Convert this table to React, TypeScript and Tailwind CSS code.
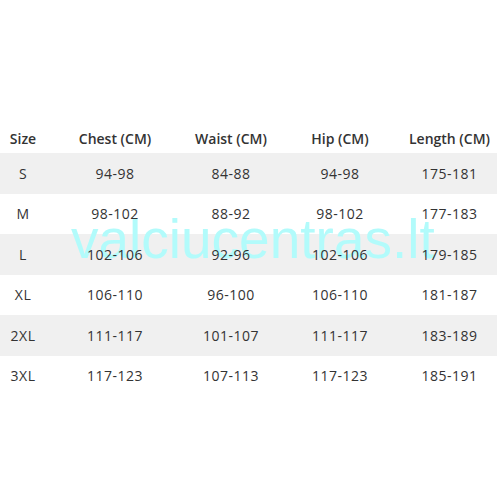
import React from "react";

const headers = ["Size", "Chest (CM)", "Waist (CM)", "Hip (CM)", "Length (CM)"];

const rows: string[][] = [
  ["S", "94-98", "84-88", "94-98", "175-181"],
  ["M", "98-102", "88-92", "98-102", "177-183"],
  ["L", "102-106", "92-96", "102-106", "179-185"],
  ["XL", "106-110", "96-100", "106-110", "181-187"],
  ["2XL", "111-117", "101-107", "111-117", "183-189"],
  ["3XL", "117-123", "107-113", "117-123", "185-191"],
];

const grid = "grid grid-cols-[46px_138px_94px_124px_95px] items-center";

export default function App() {
  return (
    <div className="relative w-[500px] h-[500px] bg-white overflow-hidden font-['Open_Sans',sans-serif] text-[#333]">
      <div className="w-[497px] pt-[123px]">
        <div className={`${grid} h-[30px] text-[14px] font-semibold`}>
          {headers.map((h) => (
            <div key={h} className="relative z-10 text-center whitespace-nowrap">
              {h}
            </div>
          ))}
        </div>
        {rows.map((r, i) => (
          <div
            key={r[0]}
            className={`${grid} h-[40.5px] text-[14px] tracking-[0.5px] ${i % 2 === 0 ? "bg-[#f0f0f0]" : "bg-white"}`}
          >
            {r.map((c, j) => (
              <div key={j} className="relative z-10 text-center whitespace-nowrap">
                {c}
              </div>
            ))}
          </div>
        ))}
      </div>
      {/* watermark */}
      <div className="pointer-events-none absolute z-[5] left-[71px] top-[212px] font-['Liberation_Sans',Arial,sans-serif] text-[55px] leading-none text-[#b2fbfb] whitespace-nowrap">
        valciucentras.lt
      </div>
    </div>
  );
}
